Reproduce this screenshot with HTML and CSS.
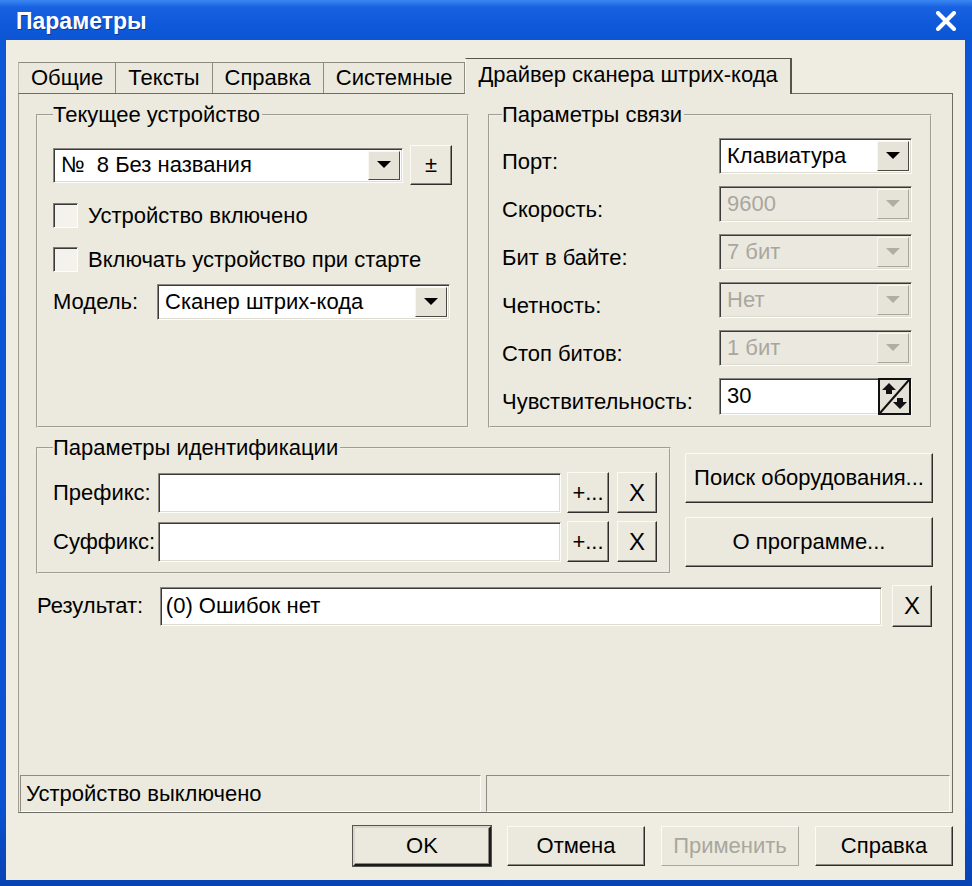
FILE: index.html
```html
<!DOCTYPE html>
<html lang="ru">
  <head>
    <meta charset="UTF-8" />
    <title>Параметры</title>
    <link rel="stylesheet" href="styles.css">
  </head>
  <body>
    <div class="window">
      <div class="titlebar">
        <span class="title">Параметры</span>
        <svg class="close" width="22" height="20" viewBox="0 0 22 20">
          <path d="M3 2 L19 18 M19 2 L3 18" stroke="#fff" stroke-width="4" stroke-linecap="round" />
        </svg>
      </div>

      <div class="dialog">
        <div class="tabs">
          <div class="tab first">Общие</div>
          <div class="tab">Тексты</div>
          <div class="tab">Справка</div>
          <div class="tab">Системные</div>
          <div class="tab active">Драйвер сканера штрих-кода</div>
        </div>

        <div class="page">
          <div class="page-body">
            <div class="row-top">
              <fieldset class="group group-device">
                <legend>Текущее устройство</legend>
                <div class="device-line">
                  <div class="combo combo-device">
                    <span class="combo-text">№&nbsp; 8 Без названия</span>
                    <span class="combo-btn"><svg width="14" height="8" viewBox="0 0 14 8"><path d="M0 0 H14 L7 7 Z" /></svg></span>
                  </div>
                  <div class="btn btn-pm">±</div>
                </div>
                <div class="check"><span class="box"></span>Устройство включено</div>
                <div class="check check-2"><span class="box"></span>Включать устройство при старте</div>
                <div class="model-line">
                  <span class="model-label">Модель:</span>
                  <div class="combo combo-model">
                    <span class="combo-text">Сканер штрих-кода</span>
                    <span class="combo-btn"><svg width="14" height="8" viewBox="0 0 14 8"><path d="M0 0 H14 L7 7 Z" /></svg></span>
                  </div>
                </div>
              </fieldset>

              <fieldset class="group group-conn">
                <legend>Параметры связи</legend>
                <div class="conn-grid">
                  <span>Порт:</span>
                  <div class="combo">
                    <span class="combo-text">Клавиатура</span>
                    <span class="combo-btn"><svg width="14" height="8" viewBox="0 0 14 8"><path d="M0 0 H14 L7 7 Z" /></svg></span>
                  </div>
                  <span>Скорость:</span>
                  <div class="combo disabled">
                    <span class="combo-text">9600</span>
                    <span class="combo-btn"><svg width="14" height="8" viewBox="0 0 14 8"><path d="M0 0 H14 L7 7 Z" /></svg></span>
                  </div>
                  <span>Бит в байте:</span>
                  <div class="combo disabled">
                    <span class="combo-text">7 бит</span>
                    <span class="combo-btn"><svg width="14" height="8" viewBox="0 0 14 8"><path d="M0 0 H14 L7 7 Z" /></svg></span>
                  </div>
                  <span>Четность:</span>
                  <div class="combo disabled">
                    <span class="combo-text">Нет</span>
                    <span class="combo-btn"><svg width="14" height="8" viewBox="0 0 14 8"><path d="M0 0 H14 L7 7 Z" /></svg></span>
                  </div>
                  <span>Стоп битов:</span>
                  <div class="combo disabled">
                    <span class="combo-text">1 бит</span>
                    <span class="combo-btn"><svg width="14" height="8" viewBox="0 0 14 8"><path d="M0 0 H14 L7 7 Z" /></svg></span>
                  </div>
                  <span>Чувствительность:</span>
                  <div class="combo spin">
                    <span class="combo-text">30</span>
                    <svg class="spin-btn" width="33" height="37" viewBox="0 0 33 37">
                      <rect x="1" y="1" width="31" height="35" fill="#e4e2d8" stroke="#111" stroke-width="2" />
                      <path d="M2 35 L31 2" stroke="#111" stroke-width="2" />
                      <path d="M11 5 L18 12 L14 12 L14 16 L8 16 L8 12 L4 12 Z" fill="#111" />
                      <path d="M19 20 L25 20 L25 24 L29 24 L22 31 L15 24 L19 24 Z" fill="#111" />
                    </svg>
                  </div>
                </div>
              </fieldset>
            </div>

            <div class="row-mid">
              <fieldset class="group group-ident">
                <legend>Параметры идентификации</legend>
                <div class="ident-grid">
                  <span>Префикс:</span>
                  <div class="field"></div>
                  <div class="btn btn-small btn-more">+...</div>
                  <div class="btn btn-small btn-x">X</div>
                  <span>Суффикс:</span>
                  <div class="field"></div>
                  <div class="btn btn-small btn-more">+...</div>
                  <div class="btn btn-small btn-x">X</div>
                </div>
              </fieldset>
              <div class="side-buttons">
                <div class="btn btn-wide">Поиск оборудования...</div>
                <div class="btn btn-wide">О программе...</div>
              </div>
            </div>

            <div class="result-line">
              <span class="result-label">Результат:</span>
              <div class="field result-field">(0) Ошибок нет</div>
              <div class="btn btn-small btn-x">X</div>
            </div>
          </div>

          <div class="statusbar">
            <div class="status-cell status-left">Устройство выключено</div>
            <div class="status-cell status-right"></div>
          </div>
        </div>

        <div class="footer">
          <div class="btn btn-foot btn-default">OK</div>
          <div class="btn btn-foot">Отмена</div>
          <div class="btn btn-foot btn-disabled">Применить</div>
          <div class="btn btn-foot">Справка</div>
        </div>
      </div>
    </div>
  </body>
</html>
```

FILE: styles.css
```css
body {
  margin: 0;
  padding: 0;
  font-family: 'Liberation Sans', Arial, sans-serif;
  font-size: 22px;
  color: #000;
}
.window {
  width: 972px;
  height: 886px;
  box-sizing: border-box;
  display: flex;
  flex-direction: column;
  background: linear-gradient(to bottom, #0c56d8 0%, #0a52d2 90%, #0843b4 100%);
}
.titlebar {
  height: 40px;
  flex: none;
  display: flex;
  align-items: center;
  justify-content: space-between;
  padding: 2px 15px 0 16px;
  box-sizing: border-box;
  background: linear-gradient(to bottom, #3a86f2 0%, #1862e2 18%, #0f5ada 60%, #0c55d4 100%);
}
.title {
  color: #fff;
  font-weight: bold;
  font-size: 23px;
  text-shadow: 1px 1px 0 #0a3a9a;
}
.close {
  display: block;
}
.dialog {
  flex: 1;
  margin: 0 7px 6px 6px;
  background: #efede2;
  display: flex;
  flex-direction: column;
}
.tabs {
  height: 35px;
  margin-top: 18px;
  padding-left: 12px;
  display: flex;
  align-items: flex-end;
}
.tab {
  height: 31px;
  box-sizing: border-box;
  padding: 0 12px;
  display: flex;
  align-items: center;
  background: #ebe9dd;
  border-top: 1px solid #8d8b81;
  border-right: 1px solid #8d8b81;
  white-space: nowrap;
}
.tab.first {
  border-left: 1px solid #b9b7ab;
}
.tab.active {
  height: 36px;
  margin-bottom: -1px;
  padding-bottom: 4px;
  position: relative;
  z-index: 1;
  background: #eceade;
  border-top: 1px solid #55544e;
  border-right: 2px solid #55544e;
  border-left: 1px solid #f8f7f0;
}
.page {
  height: 720px;
  box-sizing: border-box;
  margin: 0 12px;
  background: #eceade;
  border: 1px solid #6e6d66;
  border-left-color: #a09e93;
  display: flex;
  flex-direction: column;
}
.page-body {
  flex: 1;
  padding: 9px 20px 0 17px;
}
.group {
  margin: 0;
  padding: 0;
  box-sizing: border-box;
  border: 2px groove #f2f0e6;
}
.group legend {
  padding: 0 2px 0 0;
  margin-left: 0;
  line-height: 24px;
}
.row-top {
  display: flex;
  gap: 19px;
}
.group-device {
  width: 432px;
  height: 325px;
  padding: 18px 15px 0 15px;
}
.group-conn {
  width: 445px;
  height: 325px;
  padding: 11px 18px 0 12px;
}

/* поля и кнопки */
.combo,
.field {
  box-sizing: border-box;
  background: #fff;
  border: 1px solid;
  border-color: #8a8880 #fdfdfb #fdfdfb #8a8880;
  box-shadow: inset 1px 1px #3a3a38, inset -1px -1px #dedbd0;
}
.combo {
  height: 36px;
  display: flex;
  align-items: center;
  padding: 2px 2px 2px 7px;
}
.combo-text {
  flex: 1;
  white-space: nowrap;
}
.combo-btn {
  width: 32px;
  align-self: stretch;
  box-sizing: border-box;
  display: flex;
  align-items: center;
  justify-content: center;
  background: #e6e4d9;
  border: 1px solid;
  border-color: #f8f7f2 #4a4944 #4a4944 #f8f7f2;
}
.combo-btn svg {
  fill: #000;
}
.combo.disabled {
  background: #ebe9df;
  color: #a9a79d;
}
.combo.disabled .combo-btn {
  border-color: #f8f7f2 #a9a79d #a9a79d #f8f7f2;
}
.combo.disabled .combo-btn svg {
  fill: #b0aea4;
}
.btn {
  box-sizing: border-box;
  display: flex;
  align-items: center;
  justify-content: center;
  background: #ebe9dd;
  border: 1px solid;
  border-color: #fbfaf5 #2e2e2b #2e2e2b #fbfaf5;
  box-shadow: inset -1px -1px #8a8880;
  white-space: nowrap;
}
.device-line {
  display: flex;
  align-items: center;
  gap: 7px;
  height: 40px;
}
.combo-device {
  width: 350px;
  height: 35px;
}
.btn-pm {
  width: 42px;
  height: 40px;
  font-size: 22px;
}
.check {
  display: flex;
  align-items: center;
  gap: 10px;
  height: 25px;
  margin-top: 18px;
}
.check-2 {
  margin-top: 19px;
}
.box {
  width: 25px;
  height: 25px;
  box-sizing: border-box;
  background: #f3f2ec;
  border: 1px solid;
  border-color: #7c7a72 #fdfdfb #fdfdfb #7c7a72;
  box-shadow: inset 1px 1px #3a3a38;
}
.model-line {
  display: flex;
  align-items: center;
  margin-top: 12px;
}
.model-label {
  width: 104px;
}
.combo-model {
  width: 293px;
}
.conn-grid {
  display: grid;
  grid-template-columns: 1fr 193px;
  grid-auto-rows: 36px;
  row-gap: 12px;
  align-items: center;
}
.conn-grid > span {
  padding-top: 12px;
}
.combo.spin {
  height: 37px;
  padding: 0 0 0 7px;
}
.spin-btn {
  display: block;
}
.row-mid {
  display: flex;
  align-items: flex-start;
  margin-top: 8px;
}
.group-ident {
  width: 635px;
  padding: 12px 12px 10px 15px;
}
.ident-grid {
  display: grid;
  grid-template-columns: 105px 403px 48px 48px;
  grid-auto-rows: 41px;
  row-gap: 8px;
  align-items: center;
}
.ident-grid .field {
  height: 40px;
}
.btn-small {
  height: 41px;
}
.btn-more {
  margin-left: 6px;
}
.ident-grid .btn-x {
  margin-left: 8px;
}
.btn-x {
  width: 40px;
  font-size: 24px;
}
.ident-grid .btn-x {
  width: auto;
}
.side-buttons {
  margin-left: 14px;
  margin-top: 17px;
  display: flex;
  flex-direction: column;
  gap: 14px;
}
.btn-wide {
  width: 248px;
  height: 50px;
}
.result-line {
  display: flex;
  align-items: center;
  margin-top: 11px;
  height: 42px;
}
.result-label {
  width: 123px;
  padding-left: 1px;
}
.result-field {
  width: 723px;
  height: 39px;
  display: flex;
  align-items: center;
  padding-left: 5px;
}
.result-line .btn-x {
  height: 42px;
  margin-left: 10px;
}
.statusbar {
  height: 37px;
  margin: 0 2px 0 1px;
  display: flex;
  gap: 5px;
}
.status-cell {
  box-sizing: border-box;
  border: 1px solid;
  border-color: #8d8b81 #fbfaf5 #fbfaf5 #8d8b81;
  display: flex;
  align-items: center;
  padding-left: 5px;
}
.status-left {
  width: 461px;
}
.status-right {
  flex: 1;
}
.footer {
  display: flex;
  justify-content: flex-end;
  gap: 16px;
  padding: 13px 12px 0 0;
}
.btn-foot {
  width: 138px;
  height: 40px;
}
.btn-default {
  border: 2px solid;
  border-color: #d8d6cc #1b1b19 #1b1b19 #d8d6cc;
  outline: 1px solid #55544e;
}
.btn-disabled {
  color: #a9a79d;
  border-color: #fbfaf5 #a9a79d #a9a79d #fbfaf5;
  box-shadow: none;
}
```
